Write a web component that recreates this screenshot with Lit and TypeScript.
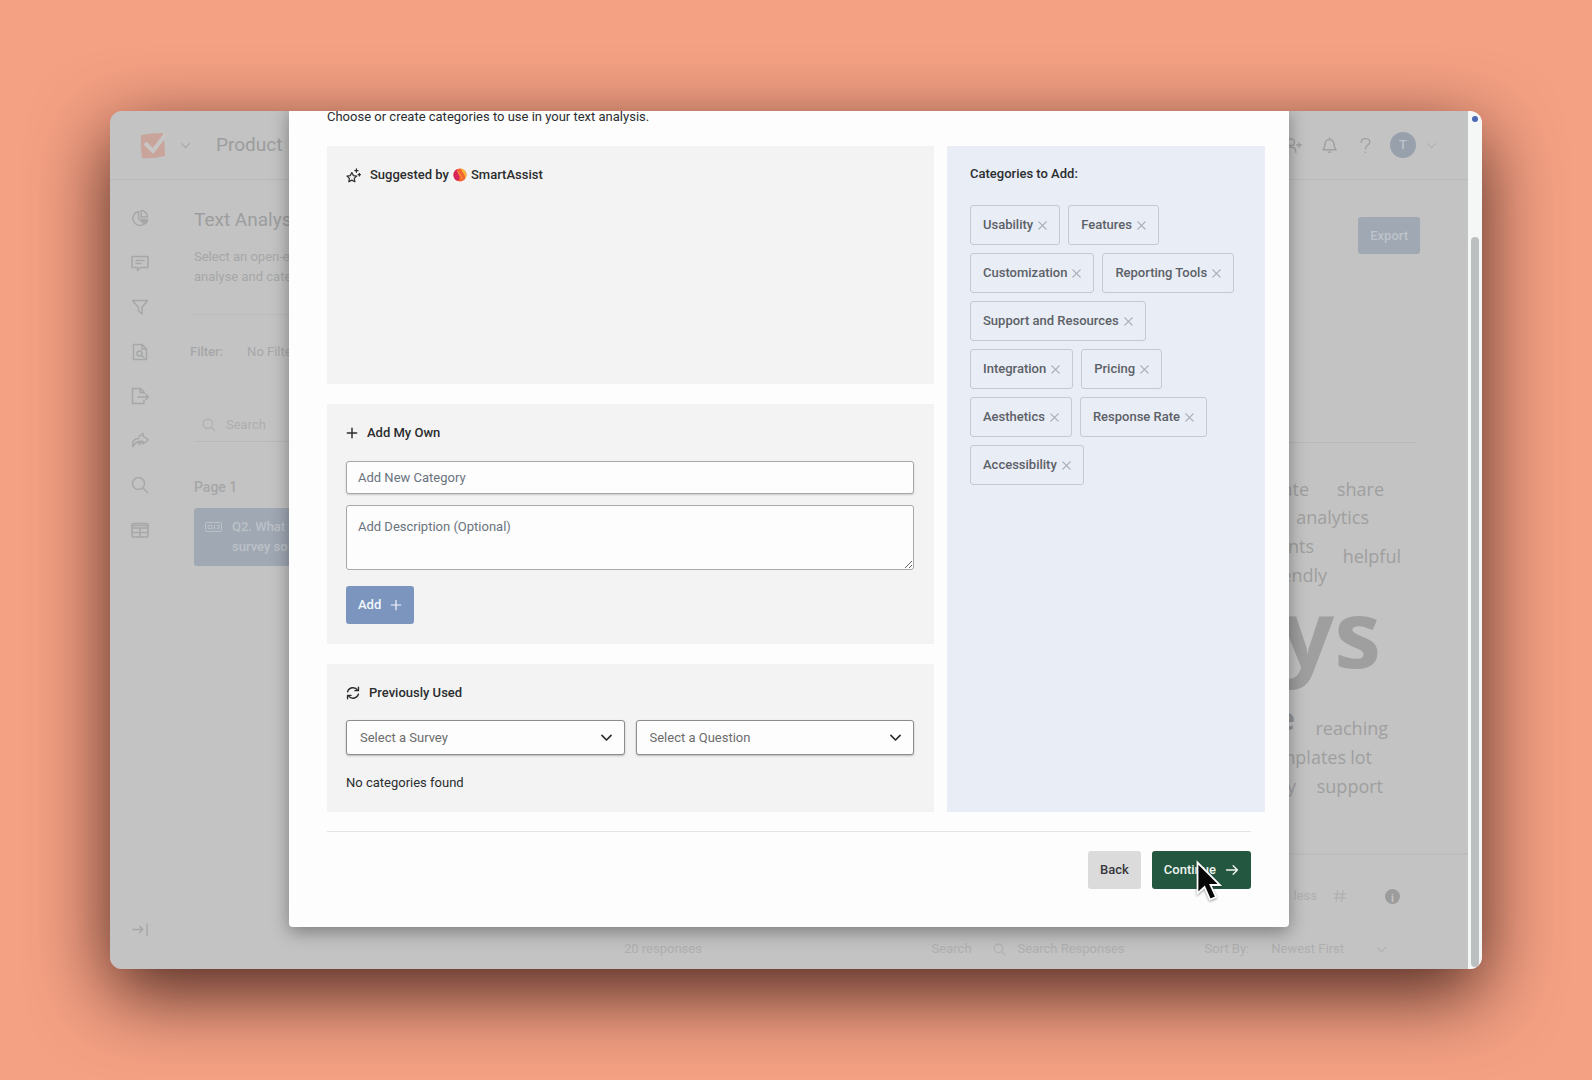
import { LitElement, html, css, svg } from "lit";
import { customElement, property } from "lit/decorators.js";

const stroke = (size: number, body: unknown, width = 1.5) => html`<svg
  width=${size}
  height=${size}
  viewBox="0 0 18 18"
  fill="none"
  stroke="currentColor"
  stroke-width=${width}
  stroke-linecap="round"
  stroke-linejoin="round"
  aria-hidden="true"
>${body}</svg>`;

const icons = {
  chart: svg`<path d="M7.5 2.5A7 7 0 1 0 13 15L7.500 9.500Z"/><path d="M10 1.500v6.500h6.500A6.500 6.500 0 0 0 10 1.500Z"/><path d="M10.500 10.500h6a6 6 0 0 1-2 4.500Z" fill="currentColor"/>`,
  comment: svg`<path d="M1 2.500h16v11H9.500L6.500 16.500v-3H1Z"/><path d="M5 6.500h8M5 9.500h5"/>`,
  filter: svg`<path d="M1.500 2.500h15L11 9.500v6.500L7.500 13V9.500Z"/>`,
  analysis: svg`<path d="M2.500 1.500h8.500l4.500 4.500v10.500h-13Z"/><path d="M11 1.500V6h4.500"/><circle cx="8.500" cy="10.500" r="2.500"/><path d="M10.500 12.500l2.500 2"/>`,
  exportFile: svg`<path d="M13 6.500V5L9.500 1.500h-8v15H13V13.500"/><path d="M9 1.500V5.500h4M7 10h10.500M15 7.500l2.500 2.500-2.500 2.500"/>`,
  share: svg`<path d="M8 4.500L12 1.500v2.500l5.500 4L12 12V9.500C8 9 4 10 2 14.500C0.500 9 4 6 8 6.500"/><path d="M8 9.500v3l3-2.500"/>`,
  search: svg`<circle cx="7.500" cy="7.500" r="6"/><path d="M12 12l4.500 4.500"/>`,
  table: svg`<rect x="1" y="2.500" width="16" height="13.500" rx="1"/><path d="M1 4.500h16M1 7h16M1 11.500h16M9 7v9" />`,
  collapse: svg`<path d="M1 9h10.500M8 5.500L11.500 9 8 12.500M16 3v12"/>`,
  chevron: svg`<path d="M3.500 6.500L9 12l5.500-5.500"/>`,
  plus: svg`<path d="M9 2v14M2 9h14"/>`,
  close: svg`<path d="M3 3l12 12M15 3L3 15"/>`,
  arrow: svg`<path d="M2 9h14M10.500 3.500L16 9l-5.500 5.500"/>`,
  refresh: svg`<path d="M2 7.500A7.200 7.200 0 0 1 15 5.500M16 10.500A7.200 7.200 0 0 1 3 12.500"/><path d="M16 1.500v4.500h-4.500M2 16.500V12h4.500"/>`,
  sparkle: svg`<path d="M7 5.500l1.800 3.600 4 .6-2.900 2.800.7 4L7 14.600l-3.600 1.900.7-4L1.200 9.700l4-.6Z"/><path d="M12.500 1v4M10.500 3h4M16 6.500v3M14.500 8h3"/>`,
  userPlus: svg`<circle cx="6.500" cy="5.500" r="3.500"/><path d="M1 16.500c0-4 2-6 5.500-6s5 2 5 6M15 6v5M12.500 8.500h5"/>`,
  bell: svg`<path d="M2 13.500c2-1.500 2-3.500 2.200-6C4.500 4.500 6.500 2.800 9 2.800s4.500 1.700 4.800 4.700c.2 2.500.2 4.500 2.200 6ZM7.500 16h3M9 1v1.500"/>`,
  help: svg`<path d="M4.500 5.500C4.500 0.500 13.500 0.500 13.500 5.500C13.500 8.500 9 8.500 9 12.500M9 16v.2"/>`,
  hash: svg`<path d="M6 2L4 16M13 2l-2 14M2 6.500h14M1.500 11.500h14"/>`,
};

@customElement("category-chip")
class CategoryChip extends LitElement {
  @property() label = "";

  static styles = css`
    :host {
      display: inline-flex;
      align-items: center;
      gap: 4px;
      box-sizing: border-box;
      height: 40px;
      padding: 0 11px 0 12px;
      border: 1px solid #c6cacf;
      border-radius: 3px;
      color: #5c6167;
      font-weight: 500;
      white-space: nowrap;
    }
    .remove {
      display: flex;
      padding: 0;
      border: 0;
      background: none;
      color: #a9aeb5;
      cursor: pointer;
    }
  `;

  render() {
    return html`<span>${this.label}</span>
      <button class="remove" type="button" aria-label="Remove ${this.label}">
        ${stroke(11, icons.close, 2)}
      </button>`;
  }
}

@customElement("survey-backdrop")
class SurveyBackdrop extends LitElement {
  static styles = css`
    :host {
      display: grid;
      grid-template-rows: 69px minmax(0, 1fr);
      min-width: 0;
      background: #c3c3c3;
      color: #a6a7a8;
      font-size: 13px;
      line-height: 20px;
    }
    svg {
      display: block;
      flex: none;
    }
    .header {
      display: flex;
      align-items: center;
      padding: 0 30px 0 29px;
      border-bottom: 1px solid #b9b9b9;
    }
    .logo {
      margin-right: 12px;
    }
    .survey-name {
      margin: 0 auto 0 24px;
      font-size: 19px;
      font-weight: 400;
      color: #9c9d9e;
    }
    .account {
      display: flex;
      align-items: center;
      gap: 19px;
      color: #9fa0a1;
    }
    .avatar {
      display: grid;
      place-items: center;
      width: 26px;
      height: 26px;
      margin-left: -3px;
      border-radius: 50%;
      background: #98a0ac;
      color: #bcc3cc;
      font-weight: 500;
    }
    .account .small {
      margin-left: -10px;
      color: #b2b2b2;
    }
    .body {
      display: grid;
      grid-template-columns: 60px 345px minmax(0, 1fr);
    }
    .rail {
      display: flex;
      flex-direction: column;
      justify-content: space-between;
      align-items: center;
      padding: 29px 0 31px;
    }
    .rail-list {
      display: flex;
      flex-direction: column;
      justify-content: space-between;
      height: 330px;
      margin: 0;
      padding: 0;
      list-style: none;
    }
    .rail-list a {
      color: inherit;
    }
    .side {
      padding: 28px 0 0 24px;
    }
    .side-title {
      margin: 0 0 15px;
      font-size: 19px;
      line-height: 24px;
      font-weight: 400;
      color: #9c9d9e;
    }
    .intro {
      margin: 0;
      padding-bottom: 27px;
    }
    .filters {
      display: flex;
      gap: 24px;
      margin-left: -4px;
      padding-top: 27px;
      border-top: 1px solid #bcbcbc;
    }
    .filters b {
      font-weight: 500;
    }
    .side-search {
      display: flex;
      align-items: center;
      gap: 10px;
      margin-top: 47px;
      padding: 6px 8px;
      border-bottom: 1px solid #b9b9b9;
      color: #aeaeae;
    }
    .page-label {
      margin: 35px 0 11px;
      font-size: 14px;
      line-height: 20px;
      font-weight: 500;
    }
    .question {
      display: flex;
      gap: 10px;
      height: 58px;
      box-sizing: border-box;
      padding: 9px 11px;
      border-radius: 3px;
      background: #a0a8b4;
      color: #bcc1c7;
      font-weight: 500;
    }
    .main {
      display: flex;
      flex-direction: column;
      min-width: 0;
    }
    .main-top {
      display: flex;
      justify-content: flex-end;
      height: 263px;
      box-sizing: border-box;
      margin-right: 52px;
      padding-top: 37px;
      border-bottom: 1px solid #b9b9b9;
    }
    .export {
      height: 37px;
      margin-right: -4px;
      padding: 0 12px;
      border: 0;
      border-radius: 3px;
      background: #a0a8b4;
      color: #bdc3ca;
      font: 500 13px Roboto, sans-serif;
    }
    .cloud {
      position: relative;
      flex: 1;
      min-height: 400px;
      border-bottom: 2px solid #bdbdbd;
      font-family: "Open Sans", "Noto Sans", sans-serif;
      font-size: 18px;
      line-height: 24px;
      color: #9f9f9f;
    }
    .word {
      position: absolute;
    }
    .share { top: 34px; right: 84px; }
    .create { top: 34px; right: 159px; }
    .analytics { top: 62px; right: 99px; }
    .respondents { top: 91px; right: 154px; }
    .helpful { top: 101px; right: 67px; }
    .friendly { top: 120px; right: 141px; }
    .surveys {
      top: 141px;
      right: 87px;
      font-size: 94px;
      line-height: 96px;
      font-weight: 700;
    }
    .response {
      top: 260px;
      right: 173px;
      font-size: 30px;
      line-height: 32px;
      font-weight: 700;
      color: #959595;
    }
    .reaching { top: 273px; right: 80px; }
    .templates { top: 302px; right: 122px; }
    .lot { top: 302px; right: 96px; }
    .easy { top: 331px; right: 172px; }
    .support { top: 331px; right: 85px; }
    .legend {
      display: flex;
      justify-content: flex-end;
      align-items: center;
      height: 66px;
      padding: 8px 68px 0 0;
      color: #b0b0b0;
    }
    .legend .hash {
      margin: 0 38px 0 16px;
    }
    .info {
      display: grid;
      place-items: center;
      width: 15px;
      height: 15px;
      border-radius: 50%;
      background: #9c9c9c;
      color: #c3c3c3;
      font-size: 11px;
      font-weight: 700;
    }
    .toolbar {
      display: flex;
      align-items: center;
      height: 40px;
      padding: 0 80px 0 109px;
      color: #afafaf;
    }
    .toolbar .count {
      margin-right: auto;
    }
    .toolbar .find {
      display: flex;
      align-items: center;
      gap: 12px;
      margin: 0 80px 0 21px;
    }
    .toolbar .sort {
      margin: 0 31px 0 22px;
    }
  `;

  render() {
    const rail: [string, unknown][] = [
      ["Results", icons.chart],
      ["Responses", icons.comment],
      ["Filters", icons.filter],
      ["Text analysis", icons.analysis],
      ["Export", icons.exportFile],
      ["Share", icons.share],
      ["Search", icons.search],
      ["Table", icons.table],
    ];
    return html`
      <header class="header">
        <svg class="logo" width="28" height="28" viewBox="0 0 28 28" aria-hidden="true">
          <path d="M2 4Q13 2 24 2Q26 13 26 25Q14 28 3 27Q1 16 2 4Z" fill="#c9a49b" />
          <path d="M6 12l8 8L27 3" fill="none" stroke="#c8c6c4" stroke-width="4" />
        </svg>
        ${stroke(13, icons.chevron)}
        <h1 class="survey-name">Product</h1>
        <div class="account">
          ${stroke(17, icons.userPlus)} ${stroke(17, icons.bell)}
          ${stroke(17, icons.help)}
          <span class="avatar">T</span>
          <span class="small">${stroke(13, icons.chevron)}</span>
        </div>
      </header>
      <div class="body">
        <nav class="rail">
          <ul class="rail-list">
            ${rail.map(
              ([name, icon]) =>
                html`<li><a href="#" aria-label=${name}>${stroke(18, icon)}</a></li>`
            )}
          </ul>
          ${stroke(17, icons.collapse)}
        </nav>
        <section class="side">
          <h2 class="side-title">Text Analysis</h2>
          <p class="intro">Select an open-ended<br />analyse and categorise</p>
          <div class="filters"><b>Filter:</b><span>No Filters</span></div>
          <div class="side-search">${stroke(14, icons.search)}<span>Search</span></div>
          <h3 class="page-label">Page 1</h3>
          <div class="question">
            <svg width="17" height="20" viewBox="0 0 17 20" fill="none" stroke="currentColor">
              <rect x="0.500" y="5.500" width="16" height="9" rx="1" />
              <path d="M3 8.500h4v3H3ZM9.500 7.500v5M12 8.500h2v3h-2" />
            </svg>
            <span>Q2. What<br />survey so</span>
          </div>
        </section>
        <section class="main">
          <div class="main-top"><button class="export" type="button">Export</button></div>
          <div class="cloud">
            <span class="word create">create</span>
            <span class="word share">share</span>
            <span class="word analytics">analytics</span>
            <span class="word respondents">nts</span>
            <span class="word helpful">helpful</span>
            <span class="word friendly">friendly</span>
            <span class="word surveys">surveys</span>
            <span class="word response">e</span>
            <span class="word reaching">reaching</span>
            <span class="word templates">templates</span>
            <span class="word lot">lot</span>
            <span class="word easy">easy</span>
            <span class="word support">support</span>
          </div>
          <div class="legend">
            <span>less</span>
            <span class="hash">${stroke(14, icons.hash)}</span>
            <span class="info">i</span>
          </div>
          <div class="toolbar">
            <span class="count">20 responses</span>
            <span>Search</span>
            <span class="find">${stroke(13, icons.search)}<span>Search Responses</span></span>
            <span>Sort By:</span>
            <span class="sort">Newest First</span>
            ${stroke(13, icons.chevron)}
          </div>
        </section>
      </div>
    `;
  }
}

@customElement("category-dialog")
class CategoryDialog extends LitElement {
  static styles = css`
    :host {
      display: flex;
      flex-direction: column;
      box-sizing: border-box;
      padding: 0 24px 38px 38px;
      border-radius: 0 0 4px 4px;
      background: #fdfdfd;
      box-shadow: 0 5px 18px rgba(0, 0, 0, 0.36);
      color: #2b2d2f;
      font-size: 13px;
      line-height: 20px;
    }
    svg {
      display: block;
      flex: none;
    }
    .lead {
      margin: 0 0 19px;
    }
    .columns {
      flex: 1;
      display: grid;
      grid-template-columns: minmax(0, 1fr) 318px;
      gap: 13px;
    }
    .sources {
      display: flex;
      flex-direction: column;
      gap: 20px;
    }
    .panel {
      box-sizing: border-box;
      padding: 19px 20px 20px 19px;
      background: #f3f3f3;
    }
    .suggested {
      flex: 1;
      min-height: 120px;
    }
    .heading {
      display: flex;
      align-items: center;
      gap: 9px;
      margin: 0;
      font-size: 13px;
      font-weight: 500;
    }
    .brand {
      display: inline-flex;
      align-items: center;
      gap: 4px;
    }
    .field,
    .area,
    .select {
      display: block;
      width: 100%;
      box-sizing: border-box;
      border: 1px solid #a6a8ab;
      border-radius: 3px;
      background: #fdfdfd;
      color: #5f6974;
      font: 13px/20px Roboto, sans-serif;
    }
    .field {
      height: 33px;
      margin-top: 18px;
      padding: 0 11px;
      box-shadow: 0 1px 2px rgba(0, 0, 0, 0.18);
    }
    .area {
      height: 65px;
      margin: 11px 0 16px;
      padding: 11px;
    }
    .field::placeholder,
    .area::placeholder {
      color: #6a737d;
      opacity: 1;
    }
    .button {
      display: inline-flex;
      align-items: center;
      height: 38px;
      padding: 0 12px;
      border: 0;
      border-radius: 3px;
      font: 500 13px/20px Roboto, sans-serif;
    }
    .add {
      gap: 9px;
      background: #7b95bf;
      color: #f4f7fb;
    }
    .previous {
      padding-bottom: 19px;
    }
    .selects {
      display: grid;
      grid-template-columns: 1fr 1fr;
      gap: 11px;
      margin: 17px 0 18px;
    }
    .picker {
      position: relative;
    }
    .select {
      height: 35px;
      padding: 0 13px;
      appearance: none;
      border-color: #8a8c8f;
      color: #6c6c6c;
      box-shadow: 0 1px 2px rgba(0, 0, 0, 0.25);
    }
    .caret {
      position: absolute;
      top: 10px;
      right: 11px;
      pointer-events: none;
    }
    .empty {
      margin: 0;
    }
    .chosen {
      padding: 18px 23px;
      background: #e9edf5;
    }
    .chosen-title {
      margin: 0 0 21px;
      font-size: 13px;
      font-weight: 500;
      line-height: 20px;
    }
    .chips {
      display: flex;
      flex-wrap: wrap;
      gap: 8px;
    }
    .actions {
      display: flex;
      justify-content: flex-end;
      gap: 11px;
      margin: 19px 14px 0 0;
      padding-top: 19px;
      border-top: 1px solid #e4e4e4;
    }
    .back {
      background: #dbdbdb;
      color: #37393b;
    }
    .continue {
      position: relative;
      gap: 9px;
      background: #24573f;
      color: #f0f5f2;
    }
    .pointer {
      position: absolute;
      top: 9px;
      left: 44px;
      filter: drop-shadow(0 1px 1px rgba(0, 0, 0, 0.4));
    }
  `;

  render() {
    const chosen = [
      "Usability",
      "Features",
      "Customization",
      "Reporting Tools",
      "Support and Resources",
      "Integration",
      "Pricing",
      "Aesthetics",
      "Response Rate",
      "Accessibility",
    ];
    const picker = (text: string) => html`<div class="picker">
      <select class="select" aria-label=${text}>
        <option>${text}</option>
      </select>
      <span class="caret">${stroke(15, icons.chevron, 2)}</span>
    </div>`;
    return html`
      <p class="lead">Choose or create categories to use in your text analysis.</p>
      <div class="columns">
        <div class="sources">
          <section class="panel suggested">
            <h2 class="heading">
              ${stroke(15, icons.sparkle)}
              <span class="brand">
                Suggested by
                <svg width="14" height="14" viewBox="0 0 14 14" aria-hidden="true">
                  <circle cx="7" cy="7" r="6.500" fill="#f2632f" />
                  <path d="M4 1.200A6.500 6.500 0 0 0 4.500 13C7 12 7 9 5.500 7Z" fill="#d8245c" />
                  <path d="M8 .6A6.500 6.500 0 0 1 12 11C13 7 9 5 8 .6Z" fill="#f8b63a" />
                  <path d="M4.500 3c1 3 4.500 4 4.500 8" fill="none" stroke="#f9a04a" />
                </svg>
                SmartAssist
              </span>
            </h2>
          </section>
          <section class="panel">
            <h2 class="heading">${stroke(12, icons.plus, 2.2)}<span>Add My Own</span></h2>
            <input class="field" type="text" placeholder="Add New Category" aria-label="Add New Category" />
            <textarea class="area" placeholder="Add Description (Optional)" aria-label="Add Description (Optional)"></textarea>
            <button class="button add" type="button">Add ${stroke(12, icons.plus, 1.8)}</button>
          </section>
          <section class="panel previous">
            <h2 class="heading">${stroke(14, icons.refresh, 1.8)}<span>Previously Used</span></h2>
            <div class="selects">${picker("Select a Survey")}${picker("Select a Question")}</div>
            <p class="empty">No categories found</p>
          </section>
        </div>
        <section class="chosen">
          <h2 class="chosen-title">Categories to Add:</h2>
          <div class="chips">
            ${chosen.map((c) => html`<category-chip .label=${c}></category-chip>`)}
          </div>
        </section>
      </div>
      <footer class="actions">
        <button class="button back" type="button">Back</button>
        <button class="button continue" type="button">
          Continue ${stroke(14, icons.arrow, 1.8)}
          <svg class="pointer" width="28" height="42" viewBox="0 0 28 42" aria-hidden="true">
            <path
              d="M1.500 2.500V33.500L8.500 27L14 39.500L20 37L14.500 25H24Z"
              fill="#060606"
              stroke="#fff"
              stroke-width="1.8"
            />
          </svg>
        </button>
      </footer>
    `;
  }
}

@customElement("app-root")
class AppRoot extends LitElement {
  static styles = css`
    :host {
      display: flex;
      flex-direction: column;
      box-sizing: border-box;
      min-height: 100vh;
      padding: 111px 110px;
      background: #f4a083;
      font-family: Roboto, "Liberation Sans", sans-serif;
      overflow: hidden;
    }
    .window {
      flex: 1;
      display: flex;
      overflow: hidden;
      border-radius: 12px;
      box-shadow: 0 24px 76px rgba(20, 0, 0, 0.76);
    }
    .stage {
      flex: 1;
      display: grid;
      grid-template-columns: minmax(0, 1fr);
      overflow: hidden;
    }
    .stage > * {
      grid-area: 1 / 1;
    }
    .dialog {
      z-index: 1;
      margin: -4px 179px 42px;
    }
    .scrollbar {
      display: flex;
      flex-direction: column;
      align-items: center;
      gap: 115px;
      width: 14px;
      box-sizing: border-box;
      padding: 5px 0 2px;
      background: #f5f7f7;
    }
    .dot {
      width: 6px;
      height: 6px;
      border-radius: 50%;
      background: #4a68b4;
    }
    .thumb {
      flex: 1;
      width: 8px;
      border-radius: 4px;
      background: #bbbfc0;
    }
  `;

  render() {
    return html`
      <main class="window">
        <div class="stage">
          <survey-backdrop></survey-backdrop>
          <category-dialog class="dialog" role="dialog" aria-label="Choose categories"></category-dialog>
        </div>
        <div class="scrollbar"><span class="dot"></span><span class="thumb"></span></div>
      </main>
    `;
  }
}
